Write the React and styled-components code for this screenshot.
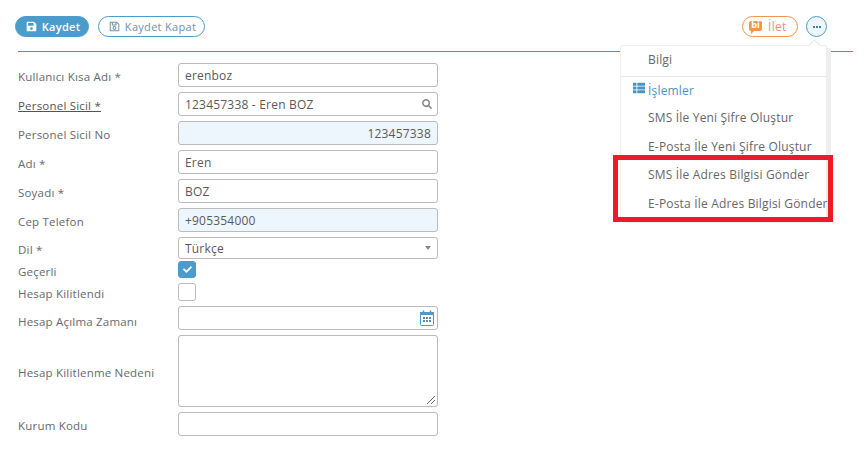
import React from 'react';
import styled, { createGlobalStyle } from 'styled-components';
import { FaSave, FaRegSave, FaCheck, FaThList, FaSearch } from 'react-icons/fa';

const GlobalStyle = createGlobalStyle`
  html, body {
    margin: 0;
    padding: 0;
    background: #fff;
    font-family: "Open Sans", "DejaVu Sans", sans-serif;
    font-size: 12px;
    letter-spacing: 0.2px;
    color: #555;
  }
  button {
    font-family: "Open Sans", "DejaVu Sans", sans-serif;
    letter-spacing: 0.3px;
  }
`;

const Page = styled.div`
  position: relative;
  width: 868px;
  height: 450px;
  overflow: hidden;
  padding: 16px 15px 0 15px;
  box-sizing: border-box;
`;

const Toolbar = styled.div`
  display: flex;
  align-items: center;
  gap: 9px;
  height: 21px;
`;

const Rule = styled.div`
  height: 1px;
  background: #4b94c0;
  margin: 14px 0 11px 3px;
`;

const Pill = styled.button`
  display: inline-flex;
  align-items: center;
  justify-content: center;
  gap: 5px;
  height: 21px;
  width: ${p => p.$w}px;
  box-sizing: border-box;
  padding: 0 0 0 2px;
  border-radius: 11px;
  border: 1px solid #4b9cca;
  background: ${p => (p.$primary ? '#4b9cca' : '#fff')};
  color: ${p => (p.$primary ? '#fff' : '#6f93a9')};
  font-size: 11px;
  font-weight: ${p => (p.$primary ? 600 : 400)};
`;

const RightTools = styled.div`
  margin-left: auto;
  margin-right: 26px;
  display: flex;
  align-items: center;
  gap: 8px;
`;

const SendPill = styled.button`
  display: inline-flex;
  align-items: center;
  gap: 6px;
  height: 21px;
  width: 56px;
  box-sizing: border-box;
  padding: 0 0 0 6px;
  border-radius: 11px;
  border: 1px solid #f2934f;
  background: #fff;
  color: #f58f6f;
  font-size: 12px;
`;

const BiBadge = styled.span`
  position: relative;
  width: 13px;
  height: 10px;
  margin-bottom: 2px;
  border-radius: 2px;
  background: #f2934f;
  color: #fff;
  font: bold 8px/10px "DejaVu Sans", sans-serif;
  letter-spacing: 0;
  text-align: center;
  &::after {
    content: '';
    position: absolute;
    left: 2px;
    bottom: -3px;
    border-left: 3px solid #f2934f;
    border-bottom: 3px solid transparent;
  }
`;

const MoreButton = styled.button`
  width: 21px;
  height: 21px;
  padding: 0;
  box-sizing: border-box;
  border-radius: 50%;
  border: 1px solid #4b9cca;
  background: #eef5fa;
  display: flex;
  align-items: center;
  justify-content: center;
  gap: 1px;
`;

const Dot = styled.span`
  width: 2px;
  height: 2px;
  background: #3f7fa8;
`;

const Form = styled.div`
  display: flex;
  flex-direction: column;
  width: 423px;
  margin-left: 3px;
`;

const Row = styled.div`
  display: grid;
  grid-template-columns: 160px 260px;
  align-items: center;
  margin-bottom: ${p => p.$gap ?? 5}px;
`;

const Label = styled.label`
  color: #636a70;
  font-size: 11.5px;
  line-height: 12px;
  padding-top: ${p => p.$drop ?? 4}px;
  ${p => p.$link && 'text-decoration: underline; color: #555;'}
`;

const Field = styled.div`
  position: relative;
  height: ${p => p.$h ?? 24}px;
  box-sizing: border-box;
  border: 1px solid #bbb;
  border-radius: 3px;
  background: ${p => (p.$readonly ? '#eef6fd' : '#fff')};
  padding: 0 ${p => p.$pr ?? 6}px 0 6px;
  display: flex;
  align-items: center;
  justify-content: ${p => (p.$right ? 'flex-end' : 'space-between')};
  color: #5a5a5a;
`;

const Caret = styled.span`
  width: 0;
  height: 0;
  border-left: 3px solid transparent;
  border-right: 3px solid transparent;
  border-top: 4px solid #888;
`;

const CheckBox = styled.span`
  width: 18px;
  height: ${p => (p.$on ? 17 : 18)}px;
  box-sizing: border-box;
  border-radius: 3px;
  border: 1px solid ${p => (p.$on ? '#4b9cca' : '#bbb')};
  background: ${p => (p.$on ? '#4b9cca' : '#fff')};
  color: #fff;
  display: flex;
  align-items: center;
  justify-content: center;
`;

const Grip = styled.svg`
  position: absolute;
  right: 1px;
  bottom: 1px;
`;

const Menu = styled.div`
  position: absolute;
  left: 620px;
  top: 45px;
  width: 207px;
  height: 175px;
  box-sizing: border-box;
  background: #fff;
  border: 1px solid #eee;
  border-radius: 2px;
  box-shadow: 4px 3px 0 #eee;
  display: flex;
  flex-direction: column;
  &::before {
    content: '';
    position: absolute;
    top: -5px;
    left: 189px;
    width: 8px;
    height: 8px;
    background: #fff;
    border-left: 1px solid #e6e6e6;
    border-top: 1px solid #e6e6e6;
    transform: rotate(45deg);
  }
`;

const MenuItem = styled.div`
  height: 28.6px;
  flex: none;
  box-sizing: border-box;
  padding: 0 0 2px 27px;
  display: flex;
  align-items: center;
  white-space: nowrap;
  color: #666;
  letter-spacing: 0.18px;
`;

const MenuHead = styled(MenuItem)`
  position: relative;
  color: #4b94c0;
  border-top: 1px solid #e6e6e6;
  margin-top: 1px;
  padding-bottom: 0;
`;

const HeadIcon = styled.span`
  position: absolute;
  left: 12px;
  top: 5px;
  color: #4b94c0;
  display: flex;
`;

const RedBox = styled.div`
  position: absolute;
  left: 613px;
  top: 155px;
  width: 220px;
  height: 67px;
  box-sizing: border-box;
  border: 5px solid #ed1c24;
`;

const CalendarIcon = () => (
  <svg width="14" height="16" viewBox="0 0 14 16">
    <rect x="0.5" y="2.5" width="13" height="13" rx="1" fill="#fff" stroke="#4b9cca" />
    <rect x="0" y="2" width="14" height="3" fill="#4b9cca" />
    <path d="M3.5 0.5V3 M10.5 0.5V3" stroke="#4b9cca" strokeWidth="1.5" />
    <path d="M3 7h2v2H3z M6 7h2v2H6z M9 7h2v2H9z M3 10h2v2H3z M6 10h2v2H6z M9 10h2v2H9z" fill="#5f8aa6" />
  </svg>
);

const fields = [
  { label: 'Kullanıcı Kısa Adı *', value: 'erenboz' },
  { label: 'Personel Sicil *', value: '123457338 - Eren BOZ', link: true, search: true },
  { label: 'Personel Sicil No', value: '123457338', readonly: true, right: true },
  { label: 'Adı *', value: 'Eren' },
  { label: 'Soyadı *', value: 'BOZ' },
  { label: 'Cep Telefon', value: '+905354000', readonly: true },
];

const App = () => (
  <Page>
    <GlobalStyle />
    <Toolbar>
      <Pill $primary $w={74}><FaSave size={11} />Kaydet</Pill>
      <Pill $w={107}><FaRegSave size={11} />Kaydet Kapat</Pill>
      <RightTools>
        <SendPill><BiBadge>bi</BiBadge>İlet</SendPill>
        <MoreButton><Dot /><Dot /><Dot /></MoreButton>
      </RightTools>
    </Toolbar>
    <Rule />
    <Form>
      {fields.map(f => (
        <Row key={f.label}>
          <Label $link={f.link}>{f.label}</Label>
          <Field $readonly={f.readonly} $right={f.right} $pr={f.search ? 5 : 6}>
            {f.value}
            {f.search && <FaSearch size={10} color="#888" />}
          </Field>
        </Row>
      ))}
      <Row $gap={2}>
        <Label>Dil *</Label>
        <Field $h={22}>Türkçe<Caret /></Field>
      </Row>
      <Row>
        <Label $drop={5}>Geçerli</Label>
        <CheckBox $on><FaCheck size={9} /></CheckBox>
      </Row>
      <Row>
        <Label>Hesap Kilitlendi</Label>
        <CheckBox />
      </Row>
      <Row>
        <Label $drop={7}>Hesap Açılma Zamanı</Label>
        <Field $pr={3}><span /><CalendarIcon /></Field>
      </Row>
      <Row>
        <Label>Hesap Kilitlenme Nedeni</Label>
        <Field $h={72}>
          <Grip width="10" height="10" viewBox="0 0 10 10">
            <path d="M1 9 L9 1 M5 9 L9 5" stroke="#666" strokeWidth="1" />
          </Grip>
        </Field>
      </Row>
      <Row>
        <Label>Kurum Kodu</Label>
        <Field />
      </Row>
    </Form>
    <Menu>
      <MenuItem>Bilgi</MenuItem>
      <MenuHead><HeadIcon><FaThList size={12} /></HeadIcon>İşlemler</MenuHead>
      <MenuItem>SMS İle Yeni Şifre Oluştur</MenuItem>
      <MenuItem>E-Posta İle Yeni Şifre Oluştur</MenuItem>
      <MenuItem>SMS İle Adres Bilgisi Gönder</MenuItem>
      <MenuItem>E-Posta İle Adres Bilgisi Gönder</MenuItem>
    </Menu>
    <RedBox />
  </Page>
);

export default App;
